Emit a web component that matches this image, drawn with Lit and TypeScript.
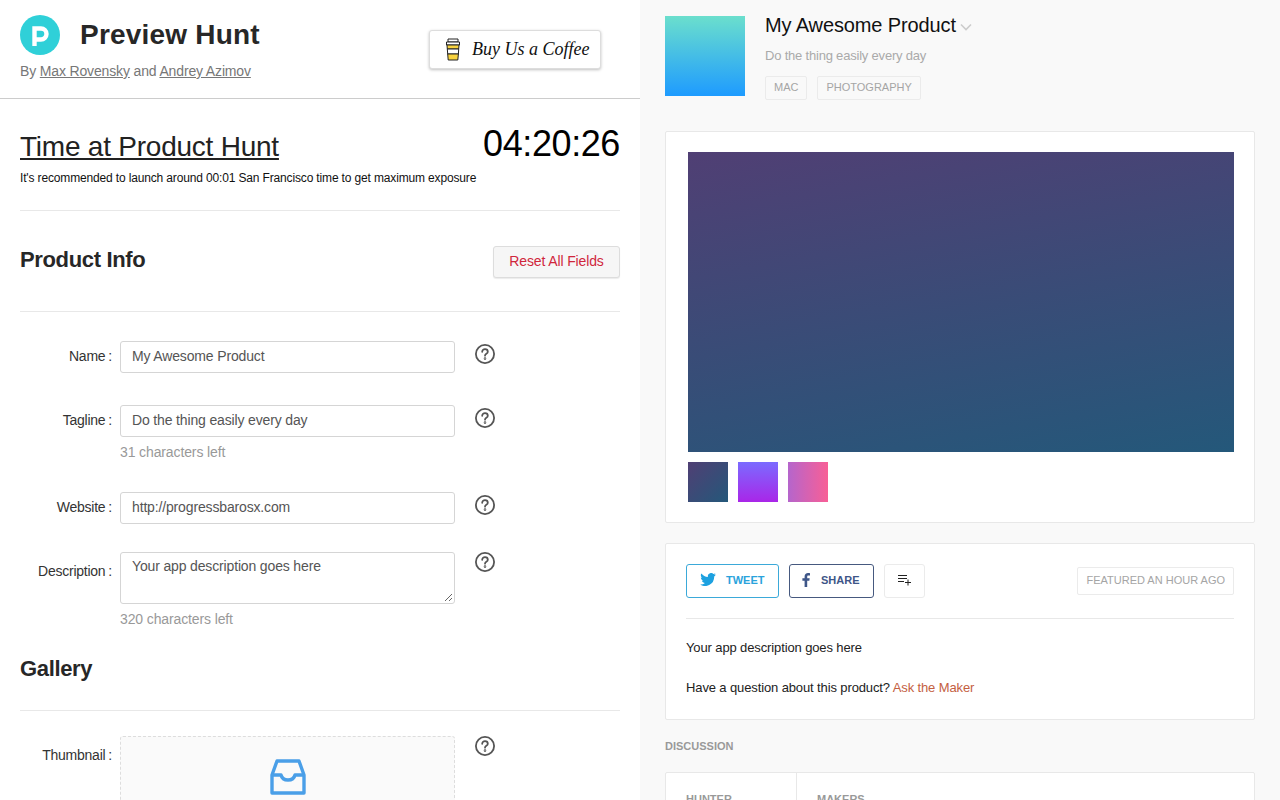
import { LitElement, html, css } from "lit";
import { customElement } from "lit/decorators.js";

const help = html`<svg class="help" width="22" height="22" viewBox="0 0 22 22" fill="none" stroke="#555" stroke-width="1.8"><circle cx="11" cy="11" r="9.1"/><path d="M8.200 8.800c0-1.500 1.200-2.600 2.800-2.600s2.800 1 2.800 2.500c0 2.200-2.800 2-2.800 4" stroke-linecap="round"/><circle cx="11" cy="15.600" r=".4" fill="#555"/></svg>`;

@customElement("app-root")
export class AppRoot extends LitElement {
  static styles = css`
    :host { display: block; width: 1280px; height: 800px; overflow: hidden; font-family: "Liberation Sans", Arial, sans-serif; background: #f9f9f9; }
    * { box-sizing: border-box; }
    .page { display: grid; grid-template-columns: 640px 640px; height: 800px; overflow: hidden; }
    .left { background: #fff; height: 800px; overflow: hidden; }
    .head { height: 99px; border-bottom: 1px solid #ccc; padding: 15px 39px 0 20px; display: flex; justify-content: space-between; }
    .brand { display: flex; flex-direction: column; }
    .brand-top { display: flex; align-items: center; gap: 20px; height: 40px; }
    .logo { width: 40px; height: 40px; border-radius: 50%; background: #2fd0d8; display: flex; align-items: center; justify-content: center; padding-top: 2px; }
    .brand h1 { margin: 0; font-size: 28px; line-height: 38px; font-weight: 700; color: #272727; letter-spacing: .2px; }
    .by { margin-top: 7px; font-size: 14px; line-height: 18px; color: #777; letter-spacing: -.15px; }
    .by a { color: #777; text-decoration: underline; }
    .coffee { margin-top: 15px; width: 172px; height: 39px; background: #fff; border: 1px solid #ddd; border-radius: 3px; box-shadow: 0 1px 3px rgba(0,0,0,.25); display: flex; align-items: center; padding-left: 15px; gap: 11px; font-family: "Liberation Serif", serif; font-style: italic; font-size: 18px; color: #111; white-space: nowrap; }
    .body { padding: 0 20px; }
    .time { display: flex; justify-content: space-between; height: 112px; border-bottom: 1px solid #e8e8e8; padding-top: 26px; }
    .time h2 { margin: 0; font-size: 28px; line-height: 44px; font-weight: 400; color: #222; text-decoration: underline; letter-spacing: -.23px; }
    .time p { margin: 1px 0 0; font-size: 12px; line-height: 16px; color: #111; letter-spacing: -.15px; white-space: nowrap; }
    .clock { margin-top: -1px; font-size: 36px; line-height: 40px; color: #000; letter-spacing: -.4px; }
    .sec { display: flex; justify-content: space-between; height: 101px; border-bottom: 1px solid #e8e8e8; padding-top: 35px; }
    .sec h2, .gal h2 { margin: 0; font-size: 22px; line-height: 28px; font-weight: 700; color: #272727; letter-spacing: -.35px; }
    .reset { width: 127px; height: 32px; background: #f6f6f6; border: 1px solid #ddd; border-radius: 3px; box-shadow: 0 1px 1px rgba(0,0,0,.08); color: #d0263c; font-size: 14px; font-family: inherit; display: flex; align-items: center; justify-content: center; letter-spacing: -.13px; padding: 0 0 2px; }
    .row { display: grid; grid-template-columns: 92px 335px 44px; column-gap: 8px; }
    .r1 { margin-top: 29px; }
    .r2 { margin-top: 32px; }
    .r3 { margin-top: 31px; }
    .r4 { margin-top: 28px; }
    .r5 { margin-top: 25px; }
    .row .lab { font-size: 14px; line-height: 18px; color: #333; text-align: right; padding-top: 6px; letter-spacing: -.25px; }
    .r4 .lab, .r5 .lab { padding-top: 10px; }
    .row .lab span { margin-left: 3px; }
    .help { margin: 2px 0 0 11px; display: block; }
    .r4 .help, .r5 .help { margin-top: -1px; }
    .field { height: 32px; border: 1px solid #d5d5d5; border-radius: 3px; padding: 0 11px 2px; display: flex; align-items: center; font-size: 14px; color: #555; letter-spacing: -.15px; }
    .area { height: 52px; align-items: flex-start; padding-top: 5px; position: relative; }
    .grip { position: absolute; right: 1px; bottom: 1px; }
    .hint { font-size: 14px; line-height: 18px; color: #999; margin-top: 6px; letter-spacing: -.12px; }
    .gal { height: 83px; border-bottom: 1px solid #e8e8e8; padding-top: 27px; }
    .drop { height: 120px; border: 1px dashed #ddd; background: #fafafa; border-radius: 3px; display: flex; justify-content: center; padding-top: 21px; }
    .right { padding: 16px 25px 0; height: 800px; overflow: hidden; }
    .prod { display: flex; gap: 20px; height: 115px; }
    .thumb { width: 80px; height: 80px; background: linear-gradient(180deg, #6bdfcd, #1e9bff); flex: none; }
    .prod h3 { margin: -1px 0 0; font-size: 20px; line-height: 20px; font-weight: 400; color: #111; display: flex; align-items: center; gap: 4px; letter-spacing: -.12px; }
    .prod h3 svg { margin-top: 4px; }
    .prod p { margin: 12px 0 0; font-size: 13px; line-height: 18px; color: #aaa; letter-spacing: -.2px; }
    .tags { display: flex; gap: 10px; margin-top: 11px; }
    .tag { height: 24px; padding: 0 8px 2px; border: 1px solid #ebebeb; border-radius: 2px; font-size: 11px; color: #a5a5a5; display: flex; align-items: center; }
    .card { background: #fff; border: 1px solid #e8e8e8; border-radius: 2px; }
    .gallery { height: 392px; padding: 20px 20px 0 22px; }
    .hero { width: 546px; height: 300px; background: linear-gradient(170deg, #503f74, #24587a); }
    .minis { display: flex; gap: 10px; margin-top: 10px; }
    .mini { width: 40px; height: 40px; }
    .m1 { background: linear-gradient(135deg, #503f74, #24587a); }
    .m2 { background: linear-gradient(180deg, #7b6bff, #a926e8); }
    .m3 { background: linear-gradient(90deg, #b565cc, #f85f96); }
    .info { margin-top: 20px; height: 177px; padding: 20px 20px 0; }
    .actions { display: flex; align-items: flex-start; gap: 10px; height: 55px; border-bottom: 1px solid #e8e8e8; }
    .btn { height: 34px; border-radius: 3px; border: 1px solid; display: flex; align-items: center; font-size: 11px; font-weight: 700; font-family: inherit; background: #fff; padding-bottom: 4px; }
    .tw { width: 93px; color: #2aa3dc; border-color: #3ba9d9; padding-left: 13px; gap: 10px; }
    .fb { width: 85px; color: #3e5688; border-color: #46597f; padding-left: 12px; gap: 11px; }
    .add { width: 41px; border-color: #ebebeb; justify-content: center; }
    .feat { margin-left: auto; margin-top: 3px; height: 28px; padding: 0 8px 3px; border: 1px solid #ebebeb; border-radius: 2px; font-size: 11px; color: #a5a5a5; display: flex; align-items: center; }
    .desc { margin: 19px 0 0; font-size: 13px; line-height: 20px; color: #222; letter-spacing: -.12px; }
    .desc a { color: #c4603f; }
    .disc { margin: 19px 0 0; font-size: 11px; line-height: 14px; font-weight: 700; color: #999; height: 33px; }
    .people { display: flex; height: 60px; }
    .people div { font-size: 11px; font-weight: 700; color: #999; padding: 20px 20px 0; }
    .people .hunter { width: 131px; border-right: 1px solid #e8e8e8; }
  `;

  render() {
    return html`<div class="page">
      <section class="left">
        <header class="head">
          <div class="brand">
            <div class="brand-top">
              <div class="logo"><svg width="20" height="22" viewBox="0 0 20 22" fill="none" stroke="#fff" stroke-width="4.400"><path d="M4.500 21V3.500h6.500a5.500 5.500 0 0 1 0 11H4.500"/></svg></div>
              <h1>Preview Hunt</h1>
            </div>
            <div class="by">By <a>Max Rovensky</a> and <a>Andrey Azimov</a></div>
          </div>
          <div class="coffee">
            <svg width="16" height="23" viewBox="0 0 16 23" stroke="#222" stroke-width="1"><path d="M3 1h10v3H3z" fill="#fff"/><path d="M1.500 4h13v3h-13z" fill="#fff"/><path d="M2 7h12l-.3 4H2.300z" fill="#f8d33f"/><path d="M2.300 11h11.400l-.3 5H2.700z" fill="#fff"/><path d="M2.700 16h10.700l-.6 6H3.200z" fill="#f8d33f"/></svg>
            <span>Buy Us a Coffee</span>
          </div>
        </header>
        <div class="body">
          <div class="time">
            <div><h2>Time at Product Hunt</h2><p>It's recommended to launch around 00:01 San Francisco time to get maximum exposure</p></div>
            <div class="clock">04:20:26</div>
          </div>
          <div class="sec"><h2>Product Info</h2><button class="reset">Reset All Fields</button></div>
          <div class="row r1"><div class="lab">Name<span>:</span></div><div class="field">My Awesome Product</div>${help}</div>
          <div class="row r2"><div class="lab">Tagline<span>:</span></div><div><div class="field">Do the thing easily every day</div><div class="hint">31 characters left</div></div>${help}</div>
          <div class="row r3"><div class="lab">Website<span>:</span></div><div class="field">http://progressbarosx.com</div>${help}</div>
          <div class="row r4"><div class="lab">Description<span>:</span></div><div><div class="field area">Your app description goes here<svg class="grip" width="9" height="9" viewBox="0 0 9 9" stroke="#666"><path d="M1 8l7-7M5 8l3-3"/></svg></div><div class="hint">320 characters left</div></div>${help}</div>
          <div class="gal"><h2>Gallery</h2></div>
          <div class="row r5"><div class="lab">Thumbnail<span>:</span></div><div class="drop"><svg width="36" height="38" viewBox="0 0 36 38" fill="none" stroke="#4a9fe8" stroke-width="3.400" stroke-linejoin="round"><path d="M2 17L7 3h22l5 14v18H2z"/><path d="M2 17h9c1 4 4 5 7 5s6-1 7-5h9"/></svg></div>${help}</div>
        </div>
      </section>
      <section class="right">
        <div class="prod">
          <div class="thumb"></div>
          <div>
            <h3>My Awesome Product <svg width="12" height="8" viewBox="0 0 12 8" fill="none" stroke="#ccc" stroke-width="1.600"><path d="M1 1.500l5 5 5-5"/></svg></h3>
            <p>Do the thing easily every day</p>
            <div class="tags"><span class="tag">MAC</span><span class="tag">PHOTOGRAPHY</span></div>
          </div>
        </div>
        <div class="card gallery">
          <div class="hero"></div>
          <div class="minis"><div class="mini m1"></div><div class="mini m2"></div><div class="mini m3"></div></div>
        </div>
        <div class="card info">
          <div class="actions">
            <button class="btn tw"><svg width="16" height="13" viewBox="0 0 24 20" fill="#1da1e0"><path d="M24 2.400c-.9.400-1.800.7-2.800.8 1-.6 1.800-1.600 2.200-2.700-1 .6-2 1-3.100 1.200A4.900 4.900 0 0 0 11.900 6.200C7.800 6 4.200 4 1.700.9.300 3.100 1 6 3.200 7.500c-.8 0-1.600-.2-2.200-.6 0 2.300 1.600 4.400 3.900 4.900-.7.200-1.500.2-2.200.1.600 2 2.400 3.400 4.600 3.400A9.900 9.900 0 0 1 0 17.800 14 14 0 0 0 21.500 5.400c1-.7 1.800-1.600 2.500-3z"/></svg>TWEET</button>
            <button class="btn fb"><svg width="8" height="14" viewBox="0 0 8 14" fill="#3e5688"><path d="M5.200 14V7.800h2.100l.4-2.500H5.200V3.800c0-.8.300-1.200 1.300-1.200H8V.2C7.700.1 6.900 0 6 0 4 0 2.600 1.200 2.600 3.500v1.800H.4v2.500h2.200V14z"/></svg>SHARE</button>
            <button class="btn add"><svg width="14" height="12" viewBox="0 0 14 12" fill="none" stroke="#222" stroke-width="1"><path d="M0 1.500h9M0 4.500h9M0 7.500h6M10 5.500v6M7 8.500h6"/></svg></button>
            <div class="feat">FEATURED AN HOUR AGO</div>
          </div>
          <p class="desc">Your app description goes here<br><br>Have a question about this product? <a>Ask the Maker</a></p>
        </div>
        <div class="disc">DISCUSSION</div>
        <div class="card people"><div class="hunter">HUNTER</div><div>MAKERS</div></div>
      </section>
    </div>`;
  }
}
